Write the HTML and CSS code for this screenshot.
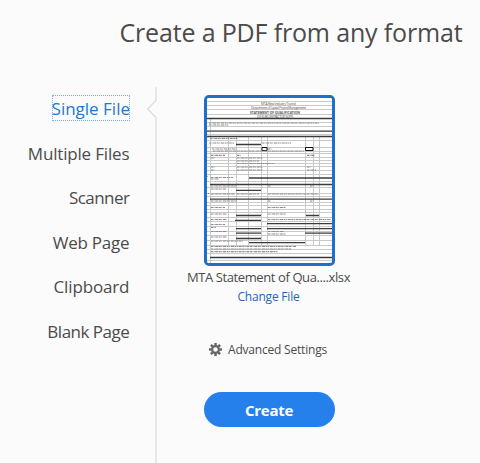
FILE: index.html
```html
<!DOCTYPE html>
<html lang="en">
<head>
<meta charset="utf-8">
<title>Create a PDF</title>
<link rel="stylesheet" href="styles.css">
</head>
<body>
<h1 class="title"><span>Create a PDF from any format</span></h1>
<main class="layout">
  <nav class="sources">
    <a class="source active"><span>Single File</span></a>
    <a class="source multiple"><span>Multiple Files</span></a>
    <a class="source scanner"><span>Scanner</span></a>
    <a class="source web"><span>Web Page</span></a>
    <a class="source clip"><span>Clipboard</span></a>
    <a class="source blank"><span>Blank Page</span></a>
  </nav>
  <svg class="divider" width="12" height="376" viewBox="0 0 12 376" fill="none" stroke="#dcdcdc"><path d="M9 0V13.500L.7 22 9 30.500V376" stroke-width="1.3"/></svg>
  <section class="panel">
    <div class="thumb">
      <svg class="sheet" viewBox="207 98 125 165" preserveAspectRatio="none">
        <path fill="#fff" d="M207 98h125v165H207z"/>
        <g stroke="#c9c9c9" stroke-width="1">
          <path d="M207 101.500h125M207 105.500h125M207 109.500h125M207 114.500h125M207 122.500h125M207 126.500h125M207 134.500h125M207 140.500h125M207 147.500h125M207 151.500h125M207 153.500h125M207 157.500h125M207 160.500h125M207 163.500h125M207 166.500h125M207 170.500h125M207 174.500h125M207 181.500h125M207 187.500h125M207 193.500h125M207 196.500h125M207 202.500h125M207 205.500h125M207 209.500h125M207 212.500h125M207 217.500h125M207 221.500h125M207 226.500h125M207 231.500h125M207 235.500h125M207 240.500h125M207 245.500h125M207 249.500h125M207 253.500h125M207 260.500h125"/>
          <path d="M210.500 118v145M228.500 137v108M236.500 137v108M248.500 137v108M261.500 137v108M267.500 137v108M305.500 137v108M313.500 137v108M319.500 137v108"/>
        </g>
        <g stroke="#3b3b3b" stroke-width="1.3">
          <path d="M207 118.500h125M207 131.200h125M207 136.500h125M236 144.500h25M249 178h83M210 184.500h122M236 190.300h25M210 199.200h122M236 215.500h25M306 215.500h13M235 220.300h26M267 223.600h65M236 228.700h25M267 228.700h65M236 233.200h25M305 233.200h27M236 238.500h25M249 242.700h56M210 257.500h122"/>
        </g>
        <g fill="#fff" stroke="#111" stroke-width="1"><path d="M262 147.500h5v3h-5zM305.500 147.500h7.500v3h-7.500z"/></g>
        <g class="small">
          <text x="261" y="104.500" textLength="35">MTA New Industry Transit</text>
          <text x="251" y="108.500" textLength="55">Department of Capital Project Management</text>
          <text class="strong" x="250" y="114" textLength="50">STATEMENT OF QUALIFICATION</text>
          <text x="257" y="117.800" textLength="36">(OF SUBCONTRACTOR, SUPP)</text>
        </g>
        <g stroke="#8f8a91" stroke-width="1.2" stroke-dasharray="2 .5 1 .7 3 .6">
          <path d="M209 123h110M209 125h20M210 131h26M210 138.500h28M209 143h25M262 143h29M212 149h24M268 149h4M213 151h91M211 155.300h14M237 155.300h4M307 155.300h8M237 158h26M237 161h22M237 163.500h37M211 158h4M211 167h4M237 167h26M307 167h4M211 170h4M237 170h26M307 170h9M211 177.500h22M211 179h8M211 186h26M268 186h3M310 186h4M211 189h15M211 194h24M237 194h22M268 194h51M211 201h26M268 201h3M310 201h4M211 207.500h14M268 207.500h18M211 214h16M268 214h18M211 219.500h16M268 219.500h63M211 224.500h14M211 227.500h5M211 231.500h16M268 231.500h16M268 234h18M211 237h16M211 241h32M211 246.500h85M211 249h80M211 251.600h67"/>
        </g>
        <path fill="#8ac38b" d="M207 176h1v1h-1z"/><path fill="#c65b5b" d="M208 193h1v1h-1z"/>
      </svg>
    </div>
    <div class="filename"><span>MTA Statement of Qua....xlsx</span></div>
    <a class="change"><span>Change File</span></a>
    <div class="settings">
      <svg width="13" height="13" viewBox="0 0 13 13"><g fill="none" stroke="#666"><circle cx="6.500" cy="6.500" r="3.400" stroke-width="2.200"/><path stroke-width="2.500" d="M6.500 0v2.500M6.500 10.500V13M0 6.500h2.500M10.500 6.500H13M1.900 1.900l1.800 1.800M9.300 9.300l1.800 1.800M1.900 11.100l1.800-1.800M9.300 3.700l1.800-1.800"/></g></svg>
      <span>Advanced Settings</span>
    </div>
    <button class="create">Create</button>
  </section>
</main>
</body>
</html>
```
FILE: styles.css
```css
* { box-sizing: border-box; }
body {
  margin: 0;
  width: 480px;
  height: 463px;
  overflow: hidden;
  background: #fbfbfb;
  color: #4b4b4b;
  font-family: "Open Sans", "Noto Sans", sans-serif;
}
.title {
  margin: 0;
  height: 87px;
  padding: 14px 17.600px 0 0;
  text-align: right;
  font-size: 25px;
  letter-spacing: -0.16px;
  line-height: 36px;
  font-weight: 400;
  white-space: nowrap;
}
.layout { display: flex; height: 376px; }
.sources {
  width: 130px;
  padding-top: 8px;
  display: flex;
  flex-direction: column;
  align-items: flex-end;
  gap: 18.600px;
}
.source {
  height: 26px;
  line-height: 28px;
  font-size: 17px;
  white-space: nowrap;
}
.source:not(.active) { padding-right: 0.700px; }
.multiple { letter-spacing: -0.18px; }
.scanner { letter-spacing: -0.55px; }
.web { letter-spacing: -0.25px; }
.clip { letter-spacing: -0.15px; }
.blank { letter-spacing: -0.5px; }
.active {
  color: #2478cc;
  outline: 1px dotted #75aee6;
  outline-offset: -1px;
}
.divider { flex: none; margin-left: 17px; }
.panel {
  width: 221px;
  display: flex;
  flex-direction: column;
  align-items: center;
}
.thumb {
  width: 131px;
  height: 171px;
  margin-top: 8px;
  border: 3px solid #1d70c8;
  border-radius: 5px;
  background: #fff;
  overflow: hidden;
}
.sheet { display: block; width: 125px; height: 165px; }
.small { font-size: 3.300px; fill: #555; }
.strong { font-weight: 700; }
.filename,
.change { padding-right: 2px; }
.filename { height: 22px; line-height: 22px; font-size: 13px; letter-spacing: -0.4px; white-space: nowrap; }
.change { height: 18px; line-height: 18px; font-size: 12px; letter-spacing: -0.2px; color: #1e66b5; }
.settings {
  display: flex;
  align-items: center;
  gap: 6px;
  height: 20px;
  margin-top: 33px;
  padding-right: 3px;
  font-size: 12px;
  letter-spacing: -0.2px;
  white-space: nowrap;
}
.create {
  width: 131px;
  height: 35px;
  margin-top: 33px;
  padding: 1px 1px 0 0;
  border: 0;
  border-radius: 18px;
  background: #2680eb;
  color: #fff;
  font: 700 15px/34px "Open Sans", "Noto Sans", sans-serif;
  letter-spacing: -0.25px;
}
```
